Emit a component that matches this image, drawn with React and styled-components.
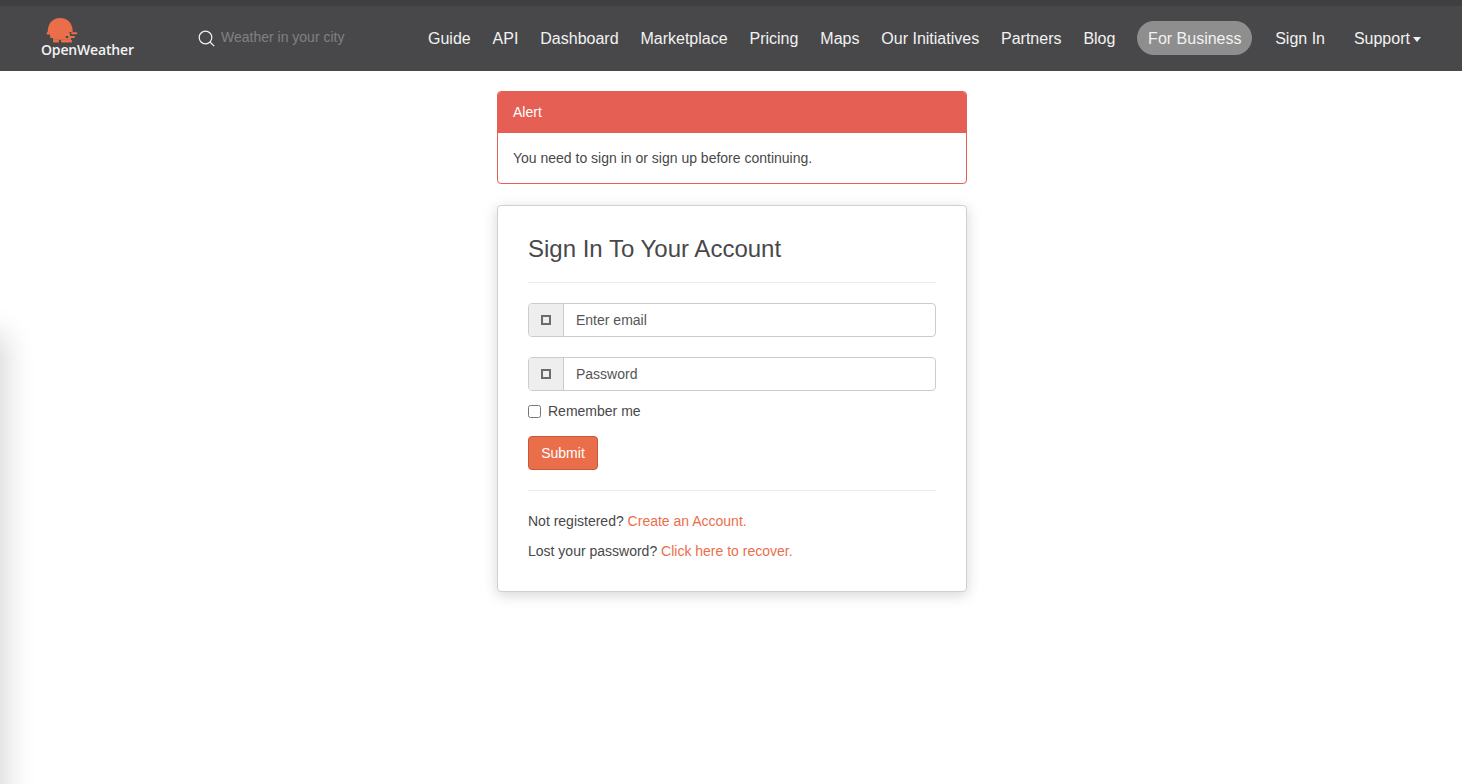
import React from 'react'
import styled, { createGlobalStyle } from 'styled-components'

const GlobalStyle = createGlobalStyle`
    html, body {
        margin: 0;
        padding: 0;
        background: #fff;
        font-family: "Liberation Sans", Arial, sans-serif;
        color: #48484a;
    }
    * {
        box-sizing: border-box;
    }
`

const Page = styled.div`
    min-height: 784px;
    overflow: hidden;
`

const SideShadow = styled.div`
    position: fixed;
    left: -40px;
    top: 340px;
    width: 40px;
    height: 600px;
    box-shadow: 0 0 30px 6px rgba(0,0,0,0.16);
`

const Header = styled.header`
    height: 71px;
    background-color: #48484a;
    border-top: 6px solid #3f3f40;
    display: flex;
    align-items: center;
    padding: 0 40px 0 41px;
`

const Logo = styled.div`
    width: 93px;
    height: 40px;
    margin-bottom: 1px;
    display: flex;
    flex-direction: column;
    align-items: flex-start;
`

const LogoMarkBox = styled.svg`
    margin-left: 5px;
    flex: none;
`

const LogoName = styled.span`
    font-family: "Open Sans", sans-serif;
    font-size: 14px;
    font-weight: 600;
    line-height: 14px;
    letter-spacing: -0.17px;
    color: #f2f2f2;
    white-space: nowrap;
    margin-top: -1px;
`

const Search = styled.div`
    display: flex;
    align-items: center;
    margin-left: 64px;
    width: 230px;
    gap: 6px;
`

const SearchText = styled.span`
    font-size: 14px;
    color: #808083;
    margin-bottom: 3px;
    margin-right: 1px;
`

const Nav = styled.nav`
    display: flex;
    align-items: center;
    gap: 21.9px;
    margin-top: 1px;
`

const NavItem = styled.a`
    font-size: 16px;
    color: #f2f2f2;
    white-space: nowrap;
    margin-left: ${props => props.$offset || 0};
    display: flex;
    align-items: center;
`

const Pill = styled.a`
    font-size: 16px;
    color: #f2f2f2;
    background-color: #8e8e8e;
    border-radius: 17px;
    height: 34px;
    width: 115px;
    margin-bottom: 2px;
    padding-top: 2px;
    display: flex;
    align-items: center;
    justify-content: center;
    white-space: nowrap;
`

const Caret = styled.span`
    width: 0;
    height: 0;
    margin-left: 3px;
    margin-top: 1px;
    border-left: 4.5px solid transparent;
    border-right: 4.5px solid transparent;
    border-top: 5.5px solid #f2f2f2;
`

const Main = styled.main`
    width: 470px;
    margin: 20px 0 0 497px;
    display: flex;
    flex-direction: column;
    gap: 21px;
`

const Alert = styled.div`
    border: 1px solid #e55f55;
    border-radius: 4px;
    overflow: hidden;
    font-size: 14px;
`

const AlertHead = styled.div`
    height: 41px;
    background-color: #e55f55;
    color: #fff;
    padding: 0 15px 1px;
    display: flex;
    align-items: center;
`

const AlertBody = styled.div`
    height: 50px;
    padding: 0 15px;
    display: flex;
    align-items: center;
    color: #48484a;
`

const Card = styled.section`
    height: 387px;
    border: 1px solid #d0d0d0;
    border-radius: 4px;
    box-shadow: 0 3px 14px rgba(0,0,0,0.17);
    padding: 0 30px;
    background: #fff;
    font-size: 14px;
`

const Title = styled.h2`
    margin: 0;
    height: 77px;
    padding-top: 28px;
    font-size: 24px;
    line-height: 30px;
    font-weight: 400;
    color: #48484a;
    border-bottom: 1px solid #ebebeb;
`

const InputGroup = styled.div`
    display: flex;
    height: 34px;
    margin-top: ${props => props.$top};
    border: 1px solid #ccc;
    border-radius: 4px;
    overflow: hidden;
`

const Addon = styled.div`
    width: 35px;
    background-color: #eee;
    border-right: 1px solid #ccc;
    display: flex;
    align-items: center;
    justify-content: center;
`

const AddonBox = styled.span`
    width: 10px;
    height: 10px;
    border: 2px solid #6a6a6a;
`

const Field = styled.div`
    flex: 1;
    padding: 0 12px;
    display: flex;
    align-items: center;
    color: #555;
`

const CheckRow = styled.label`
    display: flex;
    align-items: center;
    gap: 7px;
    height: 20px;
    margin-top: 10px;
    color: #48484a;
`

const Check = styled.span`
    width: 13px;
    height: 13px;
    border: 1px solid #767676;
    border-radius: 2.5px;
    background: #fff;
`

const Submit = styled.button`
    display: block;
    width: 70px;
    height: 34px;
    margin-top: 15px;
    background-color: #eb6e4b;
    border: 1px solid #c9573a;
    border-radius: 4px;
    color: #fff;
    font: inherit;
    padding: 0;
`

const Rule = styled.div`
    height: 1px;
    margin-top: 20px;
    background-color: #ebebeb;
`

const FootLine = styled.p`
    margin: ${props => props.$top} 0 0;
    line-height: 20px;
    color: #48484a;
`

const FootLink = styled.a`
    color: #eb6e4b;
`

const LogoMark = () => (
    <LogoMarkBox width="32" height="26" viewBox="0 0 32 26" fill="#eb6e4b">
        <path d="M1.7 14C1.7 5.5 6.5 0 14.2 0S26.7 5.5 26.7 14z" />
        <rect x="0.7" y="14" width="23" height="2.4" rx="1" />
        <rect x="25" y="14.2" width="6.3" height="2" rx="1" />
        <rect x="4" y="16" width="20" height="2" />
        <rect x="4" y="18" width="16" height="2" rx="1" />
        <rect x="22" y="18" width="7" height="2" rx="1" />
        <rect x="7" y="20" width="18" height="1.8" />
        <rect x="7" y="21.8" width="6" height="2.6" rx="1" />
        <rect x="15" y="21.8" width="11" height="2.6" rx="1" />
    </LogoMarkBox>
)

const SearchIcon = () => (
    <svg width="17" height="17" viewBox="0 0 17 17" fill="none" stroke="#f2f2f2" strokeWidth="1.2">
        <circle cx="7.5" cy="7.5" r="6.3" />
        <line x1="12" y1="12" x2="16.2" y2="16.2" />
    </svg>
)

const navItems = ['Guide', 'API', 'Dashboard', 'Marketplace', 'Pricing', 'Maps', 'Our Initiatives', 'Partners', 'Blog']

const App = () => {
    return <Page>
        <GlobalStyle />
        <SideShadow />
        <Header>
            <Logo>
                <LogoMark />
                <LogoName>OpenWeather</LogoName>
            </Logo>
            <Search>
                <SearchIcon />
                <SearchText>Weather in your city</SearchText>
            </Search>
            <Nav>
                {navItems.map(item => <NavItem key={item}>{item}</NavItem>)}
                <Pill>For Business</Pill>
                <NavItem $offset="1px">Sign In</NavItem>
                <NavItem $offset="7px">Support<Caret /></NavItem>
            </Nav>
        </Header>
        <Main>
            <Alert>
                <AlertHead>Alert</AlertHead>
                <AlertBody>You need to sign in or sign up before continuing.</AlertBody>
            </Alert>
            <Card>
                <Title>Sign In To Your Account</Title>
                <InputGroup $top="20px">
                    <Addon><AddonBox /></Addon>
                    <Field>Enter email</Field>
                </InputGroup>
                <InputGroup $top="20px">
                    <Addon><AddonBox /></Addon>
                    <Field>Password</Field>
                </InputGroup>
                <CheckRow><Check />Remember me</CheckRow>
                <Submit>Submit</Submit>
                <Rule />
                <FootLine $top="20px">Not registered? <FootLink>Create an Account.</FootLink></FootLine>
                <FootLine $top="10px">Lost your password? <FootLink>Click here to recover.</FootLink></FootLine>
            </Card>
        </Main>
    </Page>
}

export default App;
